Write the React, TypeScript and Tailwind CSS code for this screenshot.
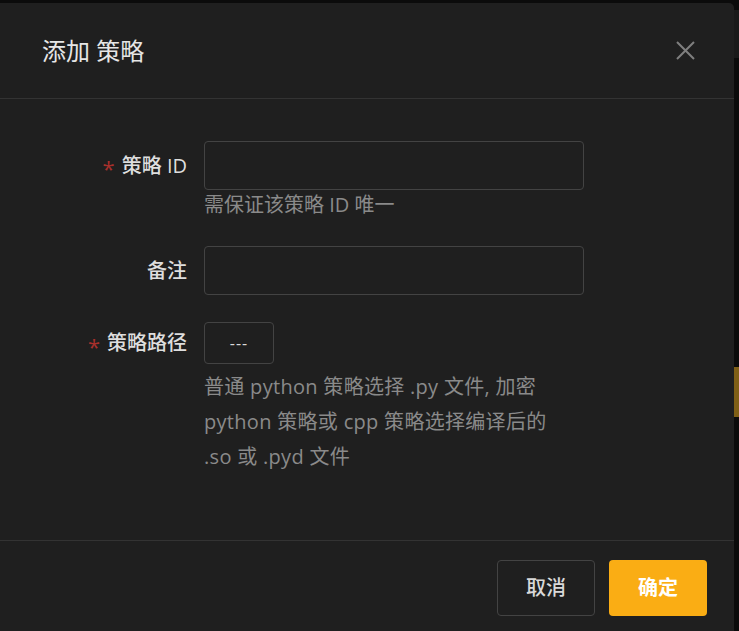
import React from "react";

const font = { fontFamily: '"Open Sans", "Noto Sans CJK SC", sans-serif' };

const Label = ({ text, required, h }: { text: string; required?: boolean; h: string }) => (
  <div className={`flex ${h} items-center justify-end text-[20px] font-medium text-[#dedede]`}>
    {required && (
      <span className="mr-[7px] h-[11px] -translate-y-[3px] text-[22px] leading-[22px] text-[#a8302c]">*</span>
    )}
    <span>{text}</span>
  </div>
);

const AddStrategyModal = () => {
  return (
    <div className="flex h-[631px] w-full flex-col rounded-tr-[5px] bg-[#1f1f1f]">
      {/* header */}
      <div className="flex h-[96px] shrink-0 items-center justify-between border-b border-[#333333] pl-[42px] pr-[39px]">
        <h2 className="text-[24px] font-normal leading-none text-[#e6e6e6]">添加 策略</h2>
        <button className="flex h-[19px] w-[19px] items-center justify-center text-[#7f7f7f]">
          <svg width="19" height="19" viewBox="0 0 19 19" fill="none" stroke="currentColor" strokeWidth="2">
            <path d="M1 1L18 18M18 1L1 18" />
          </svg>
        </button>
      </div>

      {/* body */}
      <div className="flex h-[441px] shrink-0 flex-col pt-[42px]">
        <div className="grid grid-cols-[187px_380px] gap-x-[17px]">
          <Label text="策略 ID" required h="h-[49px]" />
          <div>
            <input className="h-[49px] w-full rounded-[4px] border border-[#434343] bg-transparent px-3 text-[18px] text-[#ddd] outline-none" />
            <p className="mt-[3px] text-[20px] leading-6 text-[#8a8a8a]">需保证该策略 ID 唯一</p>
          </div>
        </div>

        <div className="mt-[29px] grid grid-cols-[187px_380px] gap-x-[17px]">
          <Label text="备注" h="h-[49px]" />
          <input className="h-[49px] w-full rounded-[4px] border border-[#434343] bg-transparent px-3 text-[18px] text-[#ddd] outline-none" />
        </div>

        <div className="mt-[27px] grid grid-cols-[187px_380px] gap-x-[17px]">
          <Label text="策略路径" required h="h-[42px]" />
          <div>
            <button className="flex h-[42px] w-[70px] items-center justify-center rounded-[4px] border border-[#434343] text-[16px] tracking-[1px] text-[#d9d9d9]">
              ---
            </button>
            <p className="mt-[5px] text-[20px] leading-[35px] tracking-[0.3px] text-[#8a8a8a]">
              普通 python 策略选择 .py 文件, 加密
              <br />
              python 策略或 cpp 策略选择编译后的
              <br />
              .so 或 .pyd 文件
            </p>
          </div>
        </div>
      </div>

      {/* footer */}
      <div className="flex justify-end gap-[14px] border-t border-[#333333] pr-[27px] pt-[19px]">
        <button className="h-[56px] w-[98px] rounded-[4px] border border-[#434343] text-[20px] font-medium text-[#d9d9d9]">
          取消
        </button>
        <button className="h-[56px] w-[98px] rounded-[4px] bg-[#faad14] text-[20px] font-semibold text-white">
          确定
        </button>
      </div>
    </div>
  );
};

export default function App() {
  return (
    <div className="flex h-[631px] w-[739px] overflow-hidden bg-[#0b0b0b] pt-[3px]" style={font}>
      <div className="w-[734px] shrink-0">
        <AddStrategyModal />
      </div>
      {/* page behind the mask */}
      <div className="flex w-[5px] shrink-0 flex-col">
        <div className="mt-[7px] h-[48px] bg-[#1a1a1a]" />
        <div className="mt-[309px] h-[50px] bg-[#7f5f16]" />
      </div>
    </div>
  );
}
